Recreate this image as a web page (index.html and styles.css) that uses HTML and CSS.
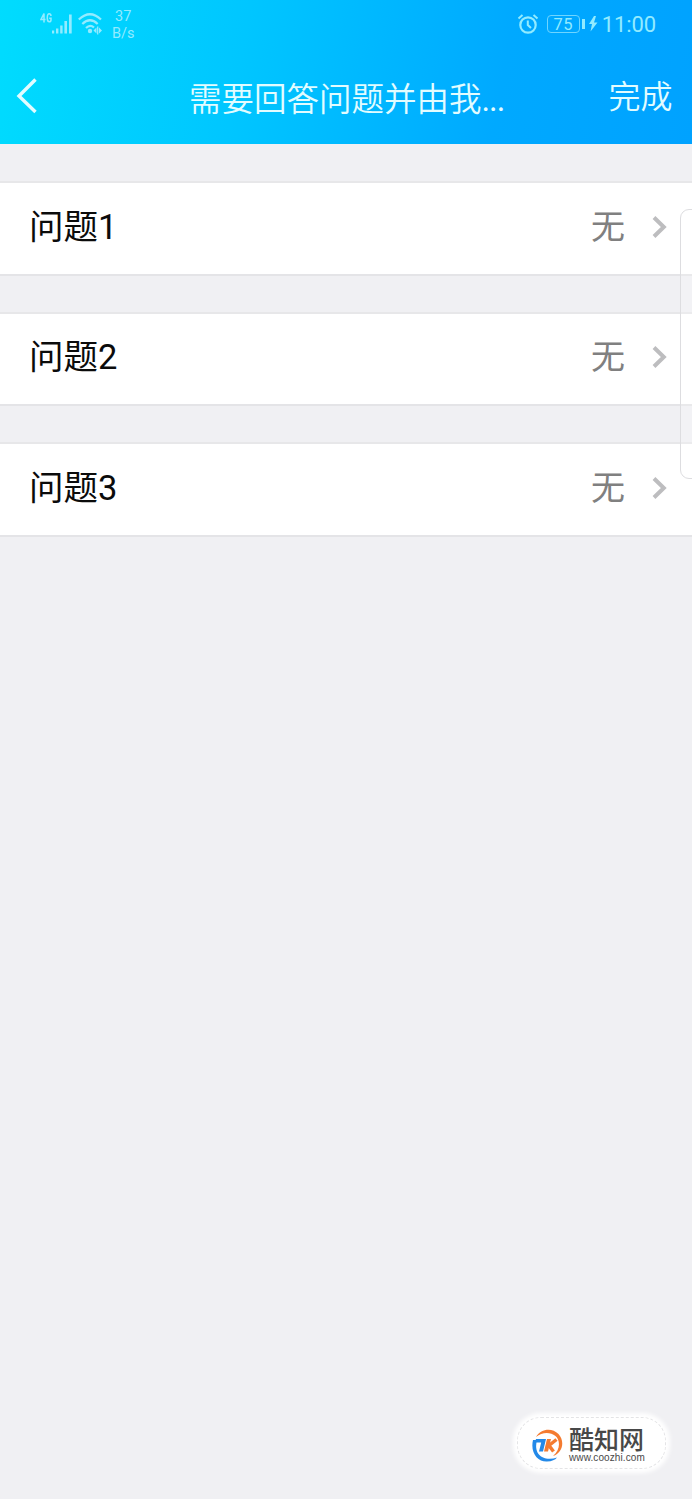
FILE: index.html
```html
<!DOCTYPE html>
<html lang="zh-CN">
<head>
<meta charset="utf-8">
<title>需要回答问题并由我审核</title>
<link rel="stylesheet" href="styles.css">
</head>
<body>
<header class="header">
  <div class="status">
    <div class="status-left">
      <svg class="signal" width="33" height="24" viewBox="0 0 33 24">
        <g fill="none" stroke="currentColor" stroke-width="1.5"><path d="M4 10.500V1.500L1 7.500H5.500M11 4Q10.800 1.800 9.200 1.800Q7.300 1.800 7.300 6Q7.300 9.800 9.200 9.800Q11 9.800 11 8V6.200H9.200"/></g>
        <g fill="currentColor"><path d="M12 18.500h2.200v3H12zM16 16.500h2.400v5H16zM20.200 13.500h2.400v8h-2.400zM24.400 9h2.600v12.500h-2.600zM29 2.500h2.700v19H29z"/></g>
      </svg>
      <svg class="wifi" width="26" height="24" viewBox="0 0 26 24" fill="none" stroke="currentColor" stroke-width="2.200">
        <path d="M.8 7.500Q12 -3 23 7.500M4.300 12Q12 4.500 19.700 12M8 16Q12 12 16 15.500"/>
        <circle cx="12" cy="19" r="2.200" fill="currentColor" stroke="none"/>
        <path d="M19.700 14.500v8" stroke-width="1.300"/>
        <path d="M15.500 18.500l3-3v6zM24 18.500l-3-3v6z" fill="currentColor" stroke="none"/>
      </svg>
      <div class="speed"><span>37</span><span>B/s</span></div>
    </div>
    <div class="status-right">
      <svg width="22" height="22" viewBox="0 0 22 22" fill="none" stroke="currentColor" stroke-width="2.200">
        <circle cx="11" cy="12" r="7.700"/><path d="M10.800 7.500V12L14 15M1.500 5.500L5.500 2M16.500 2L20.500 5.500" stroke-width="2"/>
      </svg>
      <div class="battery">75</div><i class="battery-tip"></i>
      <svg class="bolt" width="10" height="18" viewBox="0 0 10 18" fill="currentColor"><path d="M6 1L1 9h3L2.500 16.500L9.500 7.500H6L8 1z"/></svg>
      <time class="clock">11:00</time>
    </div>
  </div>
  <nav class="nav">
    <svg class="back" width="24" height="38" viewBox="0 0 24 38" fill="none" stroke="currentColor" stroke-width="3.400"><path d="M20.500 2.500L4 19L20.500 35"/></svg>
    <h1 class="title">需要回答问题并由我<span class="dots">...</span></h1>
    <span class="done">完成</span>
  </nav>
</header>
<main class="list">
  <div class="row"><span class="label">问题1</span><span class="value">无</span><svg class="arrow" width="16" height="24" viewBox="0 0 16 24"><path d="M2 2.500L11.800 12L2 21.500"/></svg></div>
  <div class="row"><span class="label">问题2</span><span class="value">无</span><svg class="arrow" width="16" height="24" viewBox="0 0 16 24"><path d="M2 2.500L11.800 12L2 21.500"/></svg></div>
  <div class="row"><span class="label">问题3</span><span class="value">无</span><svg class="arrow" width="16" height="24" viewBox="0 0 16 24"><path d="M2 2.500L11.800 12L2 21.500"/></svg></div>
</main>
<div class="edge-panel"></div>
<div class="watermark">
  <svg class="logo" width="34" height="36" viewBox="0 0 34 36" fill="none">
    <path d="M5 9C10 .5 21 -.5 27.500 6C34 13 32 24.500 22 28C30 21 29 12 24.500 8C19 3.500 11 4 5 9Z" fill="#f47b30"/>
    <path d="M2 12C-1 25 7 34 16 33.500C21 33.300 24 32 26 29.500C19 32 10 31 6.500 24.500C4.500 20 5 16 6 12Z" fill="#2389e8"/>
    <path d="M5 11H15L12 23.500H8L10.200 14.500H4Z" fill="#2389e8"/>
    <path d="M16 11H20L17 23.500H13Z" fill="#f47b30"/>
    <path d="M25.500 11.500L18 17.500L22.500 23.500" stroke="#f47b30" stroke-width="3.500"/>
  </svg>
  <div class="brand"><strong>酷知网</strong><span>www.coozhi.com</span></div>
</div>
</body>
</html>
```

FILE: styles.css
```css
* { box-sizing: border-box; }
body {
  position: relative;
  margin: 0;
  height: 1499px;
  overflow: hidden;
  background: #f0f0f3;
  font-family: Roboto, "Noto Sans CJK SC", sans-serif;
}
.header {
  height: 144px;
  color: #e2fcff;
  background: linear-gradient(100deg, #00dcfe 0%, #00c6ff 35%, #00a9ff 72%, #00a2ff 100%);
}
.status {
  display: flex;
  justify-content: space-between;
  height: 48px;
  padding: 0 36px 0 40px;
  color: #92ebff;
}
.status-left, .status-right { display: flex; align-items: center; }
.signal { margin-right: 5px; }
.speed {
  display: flex;
  flex-direction: column;
  align-items: center;
  margin: 2px 0 0 8px;
  font-size: 14.500px;
  line-height: 17px;
}
.battery {
  width: 33px;
  height: 18px;
  margin-left: 8px;
  border: 1.500px solid #6fd5ff;
  border-radius: 4px;
  font-size: 16.500px;
  line-height: 17px;
  text-align: center;
  letter-spacing: .5px;
}
.battery-tip { width: 3px; height: 10px; margin: 0 3px 0 2px; background: currentColor; }
.clock { margin: 2px 0 0 4px; font-size: 22px; line-height: 26px; letter-spacing: -.1px; }
.nav {
  display: grid;
  grid-template-columns: 189px 1fr auto;
  height: 96px;
  padding-right: 19.500px;
}
.back { margin: 29px 0 0 15px; }
.title {
  margin: 28px 0 0;
  font-size: 32.500px;
  font-weight: 350;
  line-height: 48px;
  white-space: nowrap;
}
.dots { font-weight: 400; letter-spacing: -1px; }
.done { margin-top: 25px; font-size: 32px; font-weight: 350; line-height: 48px; }
.list { display: grid; gap: 36px; padding-top: 37px; }
.row {
  display: flex;
  height: 94.600px;
  padding: 18.500px 24px 0 29px;
  border-top: 2px solid #e7e7e9;
  border-bottom: 2px solid #e4e4e7;
  background: #fff;
  line-height: 50px;
}
.label { flex: 1; font-size: 34.500px; color: #0b0b0b; }
.value { font-size: 34px; color: #808080; }
.arrow { margin: 13px 0 0 27px; fill: none; stroke: #bdbdbf; stroke-width: 4; }
.edge-panel {
  position: absolute;
  top: 209px;
  right: -2px;
  width: 14px;
  height: 270px;
  border: 1.500px solid #dddde0;
  border-radius: 9px 0 0 9px;
  background: rgba(255, 255, 255, .18);
}
.watermark {
  position: absolute;
  top: 1417px;
  left: 517px;
  display: flex;
  width: 149px;
  height: 52px;
  padding: 10px 0 0 13px;
  border: 1px dashed #e4e4e6;
  border-radius: 24px;
  background: #fff;
  box-shadow: 0 0 4px 4px #fff;
}
.logo { flex: none; }
.brand { display: flex; flex-direction: column; margin-left: 4px; color: #484848; }
.brand strong { font-size: 25px; font-weight: 500; line-height: 25px; white-space: nowrap; }
.brand span { font: 10px/10px "Liberation Sans", sans-serif; letter-spacing: .1px; }
```
